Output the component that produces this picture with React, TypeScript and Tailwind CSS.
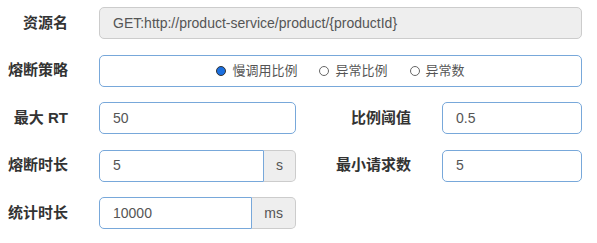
const font = "font-['Liberation_Sans','Noto_Sans_CJK_SC',sans-serif]";

function Label({ text, className = "" }: { text: string; className?: string }) {
  return (
    <div
      className={`flex items-center justify-end text-[15px] font-bold text-[#333] whitespace-nowrap ${className}`}
    >
      {text}
    </div>
  );
}

function Field({ value, className = "" }: { value: string; className?: string }) {
  return (
    <div
      className={`flex items-center h-full bg-white border border-[#78a8da] rounded-[5px] pl-[13px] text-[14px] text-[#555] ${className}`}
    >
      {value}
    </div>
  );
}

function AddonField({ value, unit }: { value: string; unit: string }) {
  return (
    <div className="flex h-full">
      <div className="flex flex-1 items-center bg-white border border-[#78a8da] rounded-l-[5px] pl-[13px] text-[14px] text-[#555]">
        {value}
      </div>
      <div className="flex items-center justify-center px-[12px] bg-[#eee] border border-l-0 border-[#ccc] rounded-r-[5px] text-[14px] text-[#555]">
        {unit}
      </div>
    </div>
  );
}

function Radio({ label, checked }: { label: string; checked?: boolean }) {
  return (
    <div className="flex items-center gap-[6px]">
      <span
        className={
          checked
            ? "w-[10px] h-[10px] rounded-full border border-[#333] bg-[#1a6fe0]"
            : "w-[10px] h-[10px] rounded-full border border-[#666] bg-white"
        }
      />
      <span className="text-[13px] text-[#555]">{label}</span>
    </div>
  );
}

export default function App() {
  return (
    <div className={`w-[597px] h-[243px] bg-white ${font}`}>
      <div className="grid grid-cols-[68px_197px_84px_140px] auto-rows-[32px] gap-x-[31px] gap-y-[15.5px] pt-[7px]">
        <Label text="资源名" />
        <div className="col-span-3 flex items-center h-full bg-[#eee] border border-[#ccc] rounded-[5px] pl-[13px] text-[14px] text-[#555]">
          GET:http://product-service/product/{"{productId}"}
        </div>

        <Label text="熔断策略" />
        <div className="col-span-3 flex items-center justify-center gap-[22px] h-full bg-white border border-[#78a8da] rounded-[5px]">
          <Radio label="慢调用比例" checked />
          <Radio label="异常比例" />
          <Radio label="异常数" />
        </div>

        <Label text="最大 RT" />
        <Field value="50" />
        <Label text="比例阈值" />
        <Field value="0.5" />

        <Label text="熔断时长" />
        <AddonField value="5" unit="s" />
        <Label text="最小请求数" />
        <Field value="5" />

        <Label text="统计时长" />
        <AddonField value="10000" unit="ms" />
      </div>
    </div>
  );
}
